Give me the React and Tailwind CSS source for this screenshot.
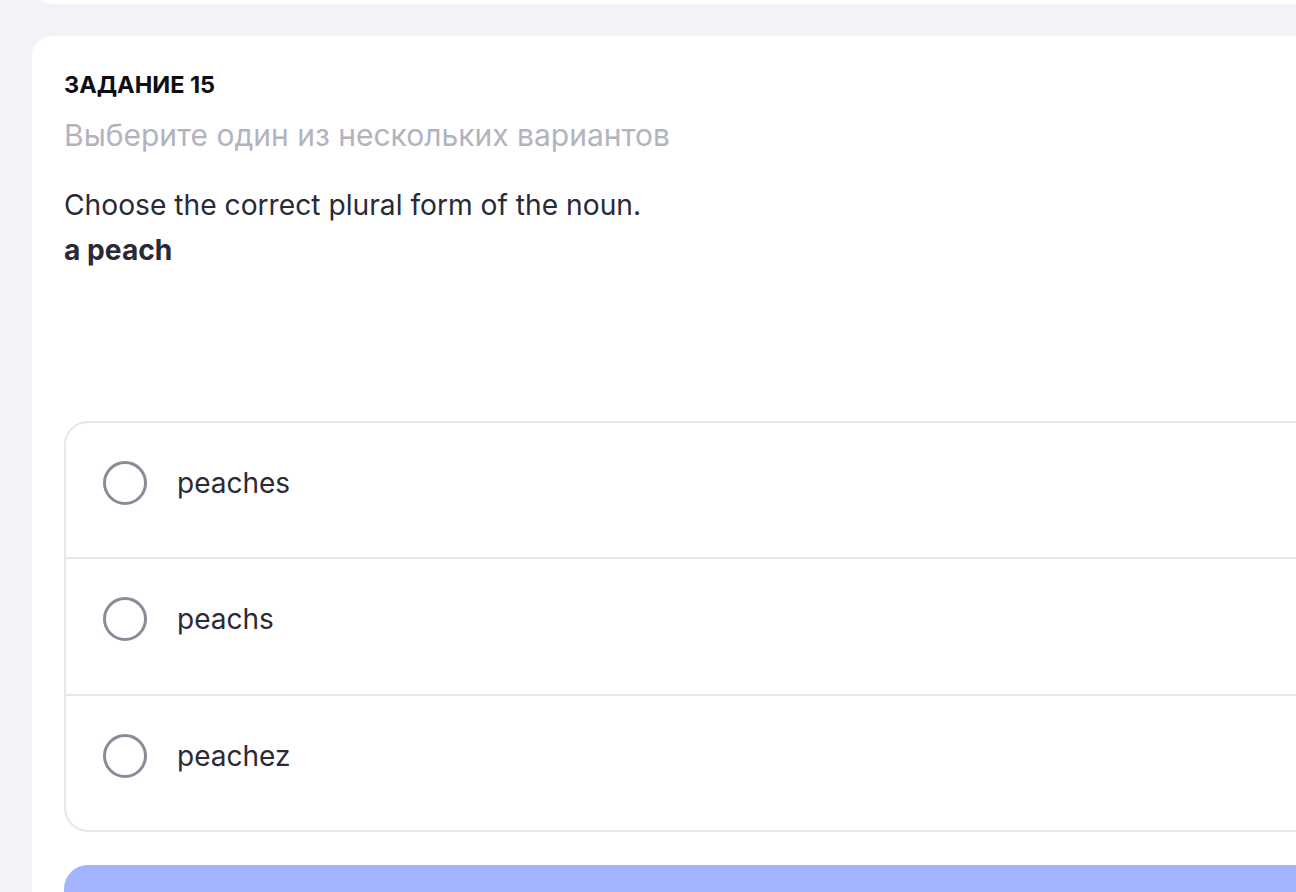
import React, { useState } from "react";

const options = [
  { label: "peaches", h: "h-[134px]" },
  { label: "peachs", h: "h-[137px]" },
  { label: "peachez", h: "h-[136px]" },
];

const Radio = ({ checked }) => (
  <span
    className={`flex h-[44px] w-[44px] shrink-0 items-center justify-center rounded-full border-[3px] ${
      checked ? "border-indigo-500" : "border-[#8a8a99]"
    }`}
  >
    {checked && <span className="h-[22px] w-[22px] rounded-full bg-indigo-500" />}
  </span>
);

export default function App() {
  const [selected, setSelected] = useState(null);

  return (
    <div
      className="h-[892px] w-[1296px] overflow-hidden bg-[#f2f2f7]"
      style={{ fontFamily: "Inter, 'Noto Sans', sans-serif" }}
    >
      <div className="w-[1400px] pl-[32px]">
        {/* previous card, mostly scrolled out */}
        <div className="-mt-[40px] h-[44px] rounded-b-[20px] bg-white" />

        <div className="mt-[32px] rounded-[20px] bg-white px-[32px] pt-[35px] pb-[40px]">
          <h2 className="text-[23.5px] font-bold leading-[28px] text-[#0d0d14]">
            ЗАДАНИЕ 15
          </h2>
          <p className="mt-[18px] text-[30px] leading-[36px] text-[#b3b3bf]">
            Выберите один из нескольких вариантов
          </p>

          <div className="mt-[30px] text-[28.2px] leading-[45px] text-[#2a2a37]">
            <p>Choose the correct plural form of the noun.</p>
            <p className="font-bold">a peach</p>
          </div>

          <div className="mt-[148px] overflow-hidden rounded-[24px] border-2 border-[#e6e6eb]">
            {options.map((opt, i) => (
              <button
                key={opt.label}
                type="button"
                onClick={() => setSelected(i)}
                className={`flex ${opt.h} w-full items-start gap-[30px] pt-[38px] pl-[37px] text-left ${
                  i > 0 ? "border-t-2 border-[#e6e6eb]" : ""
                }`}
              >
                <Radio checked={selected === i} />
                <span className="mt-[4px] text-[28px] leading-[36px] text-[#2a2a37]">
                  {opt.label}
                </span>
              </button>
            ))}
          </div>

          <button
            type="button"
            className="mt-[33px] h-[80px] w-full rounded-[24px] bg-indigo-300"
          />
        </div>
      </div>
    </div>
  );
}
